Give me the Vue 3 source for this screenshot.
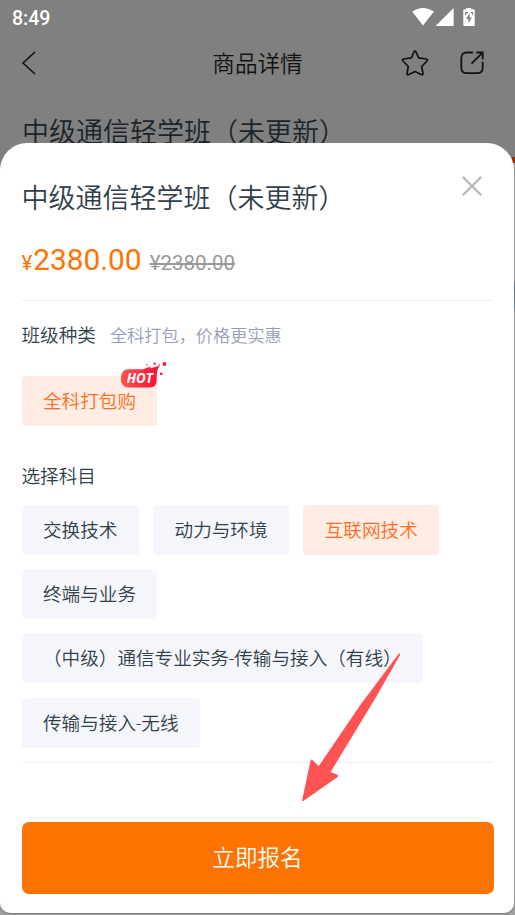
<script setup>
const courseTitle = '中级通信轻学班（未更新）'
const packages = [{ name: '全科打包购', active: true, hot: true }]
const subjects = [
  { name: '交换技术' },
  { name: '动力与环境' },
  { name: '互联网技术', active: true },
  { name: '终端与业务' },
  { name: '（中级）通信专业实务-传输与接入（有线）' },
  { name: '传输与接入-无线' },
]
</script>

<template>
  <div class="screen">
    <div class="edge"></div>
    <div class="page">
      <div class="status">
        <span class="time">8:49</span>
        <svg class="status-icons" width="64" height="20" viewBox="0 0 64 20">
          <path d="M0.3 3.8Q10.8-3.6 21.8 3.8L11 17.5Z" fill="#fff" />
          <path d="M41.6 0V18H23.5Z" fill="#fff" />
          <path d="M54.3 0h4.8v1.3h2.6q1 0 1 1V17q0 1-1 1h-9.4q-1 0-1-1V2.3q0-1 1-1h2Z" fill="#fff" />
          <path d="M57.7 5.2L54 11H56.5V15.5L59.8 9.5H57.7ZM53 4h3v1.2h-1.8V7H53ZM58.7 4H61v3h-1V5.2h-1.3Z" fill="#828282" />
        </svg>
      </div>
      <header class="nav">
        <svg width="16" height="24" viewBox="0 0 16 24" fill="none" stroke="#111" stroke-width="1.6"><path d="M14 1L2 12L14 23" /></svg>
        <h1>商品详情</h1>
        <div class="actions">
          <svg width="28" height="28" viewBox="0 0 28 28" fill="none" stroke="#111" stroke-width="1.7" stroke-linejoin="round">
            <path d="M13 3Q14 1.2 15 3L17.7 8.8L25.4 10Q27.4 10.5 26 12L20.7 17.5L22 24.5Q22 26.6 20.1 25.6L14 22.5L7.9 25.6Q6 26.6 6 24.5L7.3 17.5L2 12Q.6 10.5 2.6 10L10.3 8.8Z" />
          </svg>
          <svg width="24" height="24" viewBox="0 0 24 24" fill="none" stroke="#111" stroke-width="1.8">
            <path d="M13 1.5H7Q1.3 1.5 1.3 7.2V16.8Q1.3 22.2 7 22.2H17Q22.7 22.2 22.7 16.8V10.8M11.5 12.6L22.4 1.8M16.3 1.5H22.7V8.3" />
          </svg>
        </div>
      </header>
      <div class="behind-title">{{ courseTitle }}</div>
    </div>

    <section class="sheet">
      <div class="sheet-head">
        <h2>{{ courseTitle }}</h2>
        <svg class="close" width="20" height="20" viewBox="0 0 20 20" stroke="#b9b9b9" stroke-width="2.4" stroke-linecap="round"><path d="M1.5 1.5L18.5 18.5M18.5 1.5L1.5 18.5" /></svg>
      </div>
      <div class="prices">
        <span class="yen">¥</span><span class="price">2380.00</span><s>¥2380.00</s>
      </div>
      <div class="kind">
        <span class="label">班级种类</span>
        <span class="hint">全科打包，价格更实惠</span>
      </div>
      <div class="tags">
        <div v-for="p in packages" :key="p.name" class="tag" :class="{ active: p.active }">
          {{ p.name }}
          <svg v-if="p.hot" class="hot" width="47" height="28" viewBox="0 0 47 28">
            <defs>
              <linearGradient id="hot-fill"><stop stop-color="#ff554d" /><stop offset="1" stop-color="#ff0a38" /></linearGradient>
            </defs>
            <path d="M9 8.2H23L31 5.3L29.7 7.5L39.6 4.8Q36.7 9 36.7 15V19Q36.7 26.5 29.5 26.5H9Q.8 26.5 .8 17.5Q.8 8.2 9 8.2Z" fill="url(#hot-fill)" />
            <g fill="#ff1740"><circle cx="44.4" cy="3" r="1.9" /><circle cx="34.6" cy="2.6" r="1.2" /><circle cx="41.2" cy="12.8" r="1.4" /><circle cx="27" cy="4" r=".8" /><circle cx="39.3" cy="4" r=".8" /></g>
            <text x="6.8" y="22.2" textLength="26" lengthAdjust="spacingAndGlyphs">HOT</text>
          </svg>
        </div>
      </div>
      <div class="label subject-label">选择科目</div>
      <div class="tags">
        <div v-for="s in subjects" :key="s.name" class="tag" :class="{ active: s.active }">{{ s.name }}</div>
      </div>
      <div class="rule"></div>
      <button class="buy">立即报名</button>
      <svg class="arrow" width="100" height="150" viewBox="0 0 100 150">
        <path d="M97.7 1.7Q99.5 1 99 3L74.5 46L29.6 120L36.4 122.8Q38 123.5 36.3 125.2L2.3 149Q1 149.5 1.2 148L9.7 108Q10.1 107 11 107.7L17.8 114L60 52Z" fill="#ff5252" />
      </svg>
    </section>
  </div>
</template>

<style>
body { margin: 0; }
</style>

<style scoped>
.screen {
  position: relative;
  box-sizing: border-box;
  width: 515px;
  height: 915px;
  overflow: hidden;
  display: flex;
  flex-direction: column;
  background: linear-gradient(#808080 180px, #a0a0a0 180px);
  font-family: Roboto, "Noto Sans CJK SC", sans-serif;
  font-weight: 350;
  color: #313f49;
}
.page { position: relative; height: 143px; width: 514px; background: #808080; flex: none; }
.status { height: 36px; padding: 0 38px 0 12px; display: flex; justify-content: space-between; align-items: center; color: #fff; }
.time { font-size: 19.5px; font-weight: 500; }
.status-icons { margin-bottom: 1px; }
.nav { height: 54px; padding: 0 30px 0 21px; display: grid; grid-template-columns: 72px 1fr 83px; align-items: center; color: #111; }
.nav h1 { margin: 0; font-size: 22.6px; line-height: 32px; font-weight: inherit; text-align: center; padding: 3px 0 0 21px; }
.actions { display: flex; align-items: center; gap: 31px; }
.actions svg { flex: none; }
.behind-title { height: 53px; overflow: hidden; box-sizing: border-box; padding: 23px 0 0 22px; font-size: 27px; line-height: 40px; color: #1b242a; }
.edge {
  position: absolute;
  top: 0;
  right: 0;
  width: 3px;
  height: 915px;
  background: linear-gradient(#808080 0 157px, #8b3513 157px 163px, #a0a0a0 163px 281px, #557184 283px, #718b9b 308px, #a0a0a0 309px);
}
.sheet {
  position: relative;
  box-sizing: border-box;
  width: 514px;
  height: 770px;
  padding: 0 21px 0 21.5px;
  background: #fff;
  border-radius: 27px 27px 10px 10px;
  box-shadow: 0 1px 2px #777;
  clip-path: inset(0 -1px -2px 0);
  flex: none;
}
.sheet-head { height: 96px; display: flex; justify-content: space-between; padding-right: 11px; }
h2 { margin: 0; padding-top: 36px; font-size: 27px; line-height: 40px; font-weight: inherit; }
.close { margin-top: 33px; }
.prices { height: 61px; border-bottom: 1px solid #eee; display: flex; align-items: baseline; color: #ff7300; line-height: 42px; font-weight: 400; }
.yen { font-size: 20.5px; }
.price { margin-left: 1px; font-size: 29.8px; }
s { margin-left: 8px; font-size: 20.5px; color: #999; text-decoration-thickness: 1.5px; }
.kind { height: 75px; box-sizing: border-box; padding-top: 21px; display: flex; align-items: baseline; line-height: 28px; }
.label { font-size: 18.6px; line-height: 28px; }
.hint { margin-left: 14px; font-size: 17.2px; color: #999eb8; }
.tags { display: flex; flex-wrap: wrap; gap: 14.2px; }
.tag { position: relative; box-sizing: border-box; height: 50px; padding: 1px 21.5px 0; border-radius: 4px; background: #f5f6fb; font-size: 18.6px; line-height: 50px; white-space: nowrap; }
.tag.active { color: #ff6c1f; background: #ffece2; }
.hot { position: absolute; right: -10px; top: -15px; }
.hot text { font: italic 700 13.5px "Open Sans", sans-serif; fill: #fff; }
.subject-label { margin: 37px 0 14px; }
.rule { height: 1px; margin-top: 14.4px; background: #eee; }
.buy { display: block; width: 472px; height: 72px; margin-top: 59px; padding: 1px 0 0; border: 0; border-radius: 7px; background: #ff7300; color: #fff; font: 350 22.6px/71px Roboto, "Noto Sans CJK SC", sans-serif; }
.arrow { position: absolute; left: 301px; top: 509px; }
</style>
